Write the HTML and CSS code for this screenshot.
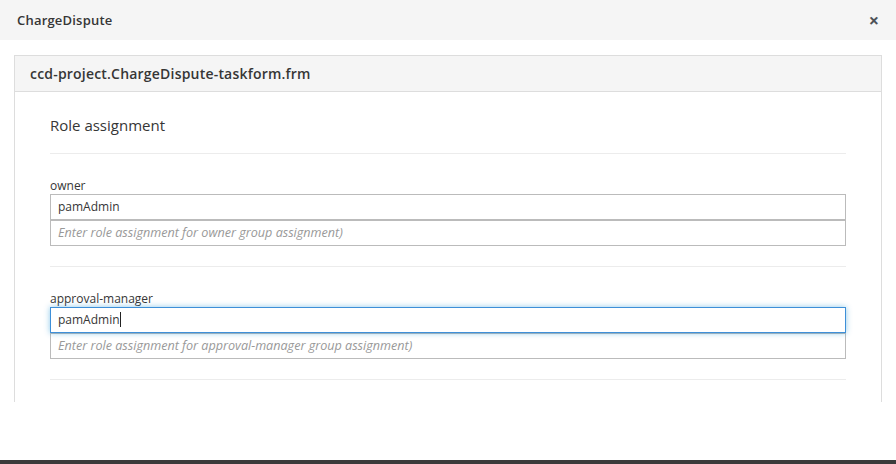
FILE: index.html
```html
<!DOCTYPE html>
<html>
<head>
<meta charset="utf-8">
<link rel="stylesheet" href="styles.css">
</head>
<body>
<div class="modal">
  <div class="modal-header">
    <h4 class="modal-title">ChargeDispute</h4>
    <span class="close">&#215;</span>
  </div>
  <div class="modal-body">
    <div class="scroll">
      <div class="panel">
        <div class="panel-heading">ccd-project.ChargeDispute-taskform.frm</div>
        <div class="panel-body">
          <div class="legend">Role assignment</div>
          <div class="group">
            <label class="label">owner</label>
            <div class="input">pamAdmin</div>
            <div class="input placeholder">Enter role assignment for owner group assignment)</div>
          </div>
          <div class="group">
            <label class="label">approval-manager</label>
            <div class="input focused">pamAdmin<span class="caret"></span></div>
            <div class="input placeholder">Enter role assignment for approval-manager group assignment)</div>
          </div>
        </div>
      </div>
    </div>
  </div>
  <div class="footer-bar"></div>
</div>
</body>
</html>
```
FILE: styles.css
```css
* { box-sizing: border-box; }
html, body { margin: 0; padding: 0; }
body {
  width: 896px;
  height: 464px;
  overflow: hidden;
  background: #fff;
  font-family: "Open Sans", "Liberation Sans", sans-serif;
  color: #363636;
}
.modal {
  display: flex;
  flex-direction: column;
  height: 464px;
}
.modal-header {
  height: 40px;
  flex: none;
  background: #f5f5f5;
  display: flex;
  align-items: center;
  justify-content: space-between;
  padding: 0 17px;
}
.modal-title {
  margin: 0;
  font-size: 13px;
  font-weight: 600;
  letter-spacing: 0.2px;
  color: #363636;
}
.close {
  font-size: 18px;
  font-weight: 700;
  color: #4d5258;
  line-height: 1;
  margin-right: 0;
  margin-top: -1px;
}
.modal-body {
  flex: 1;
  padding: 15px 14px 0 14px;
}
.scroll {
  height: 347px;
  overflow: hidden;
}
.panel {
  border: 1px solid #ddd;
  background: #fff;
}
.panel-heading {
  height: 36px;
  background: #f5f5f5;
  border-bottom: 1px solid #ddd;
  padding: 0 15px;
  display: flex;
  align-items: center;
  font-size: 14px;
  font-weight: 600;
  letter-spacing: 0.2px;
  color: #363636;
}
.panel-body {
  padding: 23px 35px 30px 35px;
}
.legend {
  font-size: 15px;
  color: #363636;
  padding-bottom: 18px;
  border-bottom: 1px solid #ececec;
  line-height: 20px;
}
.group {
  padding-top: 23px;
  padding-bottom: 20px;
  border-bottom: 1px solid #ececec;
}
.label {
  display: block;
  font-size: 12px;
  line-height: 17px;
  margin-bottom: 0;
  color: #363636;
}
.input {
  height: 26px;
  border: 1px solid #bbb;
  padding: 0 7px;
  font-size: 12px;
  line-height: 24px;
  color: #363636;
  background: #fff;
}
.placeholder {
  font-style: italic;
  font-size: 12.6px;
  color: #999;
}
.focused {
  border-color: #3d8fd8;
  box-shadow: 0 0 6px rgba(0, 136, 206, 0.45);
  position: relative;
}
.caret {
  display: inline-block;
  width: 1px;
  height: 15px;
  background: #222;
  vertical-align: -3px;
}
.footer-bar {
  height: 4px;
  flex: none;
  background: #3b3b3b;
  margin-top: auto;
}
```
